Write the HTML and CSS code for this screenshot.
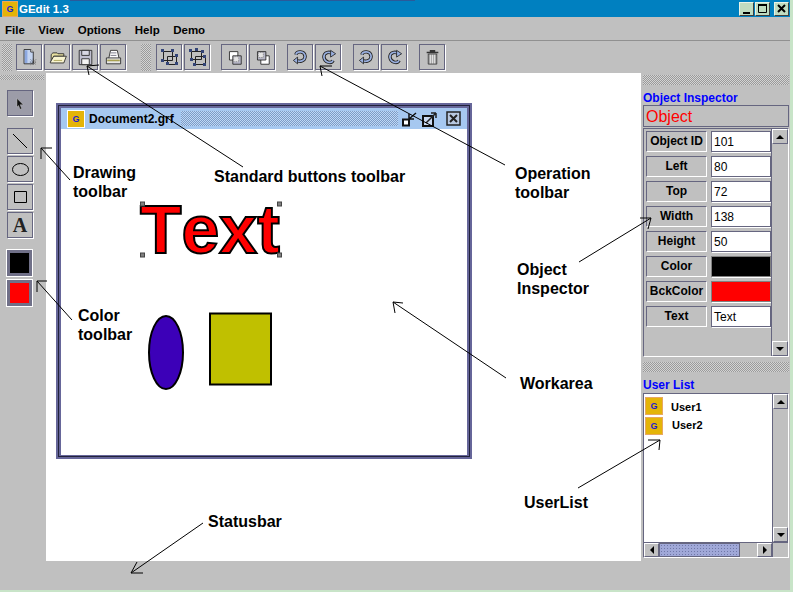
FILE: index.html
```html
<!DOCTYPE html>
<html lang="en">
<head>
    <meta charset="UTF-8">
    <title>GEdit 1.3</title>
    <link rel="stylesheet" href="styles.css">
</head>
<body>
    <svg class="defs" width="0" height="0">
        <symbol id="i-new" viewBox="-2 -2 25 25">
            <path d="M4 1h8l3 3v14H4z" fill="#c4d4f0" stroke="#222"/>
            <path d="M5 2h3v15H5z" fill="#8ca8e0"/>
            <path d="M12 1v3h3" fill="#fff" stroke="#222"/>
            <path d="M15 12v8M11 16h8M12 13l6 6M18 13l-6 6" stroke="#333" stroke-dasharray="1 1"/>
        </symbol>
        <symbol id="i-open" viewBox="-2 -2 25 25">
            <path d="M3 7l2-2h5l1 1h7v3H6L3 16z" fill="#e8e0a0" stroke="#222"/>
            <path d="M2 16l4-7h15l-3 8H2z" fill="#f8f4d0" stroke="#222"/>
            <path d="M6 14h10" stroke="#a8a050"/>
        </symbol>
        <symbol id="i-save" viewBox="-2 -2 25 25">
            <path d="M3 2h15v17H3z" fill="#c0c0d0" stroke="#222"/>
            <path d="M6 2h9v6H6z" fill="#d8d8e4" stroke="#222"/>
            <path d="M6 12h9v7H6z" fill="#f4f4f4" stroke="#222"/>
        </symbol>
        <symbol id="i-print" viewBox="-2 -2 25 25">
            <path d="M5 11l2-9h8l2 9" fill="#fff" stroke="#222"/>
            <path d="M7 5h7M7 8h7" stroke="#667"/>
            <path d="M2 11h17v7H2z" fill="#e8e8e8" stroke="#222"/>
            <path d="M3 14h15" stroke="#a8a050" stroke-width="2"/>
        </symbol>
        <symbol id="i-group" viewBox="0 0 21 21">
            <path d="M4.500 4.500h9v9h-9zM8.500 9.500h9v8h-9z" fill="none" stroke="#222"/>
            <path d="M2 2h3v3H2zM12 2h3v3h-3zM2 12h3v3H2zM16 7h3v3h-3zM7 15h3v3H7zM16 15h3v3h-3z" fill="#334477"/>
        </symbol>
        <symbol id="i-ungroup" viewBox="0 0 21 21">
            <path d="M4.500 4.500h10v8h-10zM8.500 9.500h10v8h-10z" fill="none" stroke="#222"/>
            <path d="M2 2h3v3H2zM8 1h3v3H8zM14 3h3v3h-3zM3 11h3v3H3zM16 8h3v3h-3zM6 16h3v3H6zM16 16h3v3h-3z" fill="#334477"/>
        </symbol>
        <symbol id="i-front" viewBox="-2 -2 25 25">
            <path d="M4.500 3.500h10v10h-10z" fill="#fff" stroke="#222"/>
            <path d="M8.500 8.500h10v10h-10z" fill="#b8b8c8" stroke="#222"/>
            <path d="M9.500 9.500h6v6h-6z" fill="#e4e4e4" stroke="#777" stroke-dasharray="1 1"/>
        </symbol>
        <symbol id="i-back" viewBox="-2 -2 25 25">
            <path d="M8.500 8.500h10v10h-10z" fill="#fff" stroke="#222"/>
            <path d="M4.500 3.500h10v10h-10z" fill="#b8b8c8" stroke="#222"/>
            <path d="M5.500 4.500h6v6h-6z" fill="#e4e4e4" stroke="#777" stroke-dasharray="1 1"/>
        </symbol>
        <symbol id="i-undo" viewBox="-2 -2 25 25">
            <path d="M5 7C6 3 15 2 16 9C16 15 9 16 6 14" fill="none" stroke="#222" stroke-width="4"/>
            <path d="M5 7C6 3 15 2 16 9C16 15 9 16 6 14" fill="none" stroke="#9ab0e0" stroke-width="2"/>
            <path d="M2 14l5-4v8z" fill="#9ab0e0" stroke="#222"/>
        </symbol>
        <symbol id="i-redo" viewBox="-2 -2 25 25">
            <path d="M16 14C14 18 6 17 5 10C5 4 12 3 15 6" fill="none" stroke="#222" stroke-width="4"/>
            <path d="M16 14C14 18 6 17 5 10C5 4 12 3 15 6" fill="none" stroke="#9ab0e0" stroke-width="2"/>
            <path d="M19 6l-6-4v8z" fill="#9ab0e0" stroke="#222"/>
        </symbol>
        <symbol id="i-trash" viewBox="-3 -3 27 27">
            <path d="M3 4h15M8 4V2h5v2" fill="none" stroke="#333" stroke-width="2"/>
            <path d="M5 6h11v13H5z" fill="#a8a8a8" stroke="#333"/>
            <path d="M8 7v11M10.500 7v11M13 7v11" stroke="#eee"/>
        </symbol>
        <symbol id="i-arrow" viewBox="-3 -3 27 27">
            <path d="M6 4l8 8h-4l2 5-2 1-2-5-2 2z" fill="#111" stroke="#ccc" stroke-width=".5"/>
        </symbol>
    </svg>

    <div class="app">
        <div class="titlebar">
            <span class="g-icon">G</span>
            <span class="app-title">GEdit 1.3</span>
            <div class="win-buttons">
                <span class="win-btn"><svg width="13" height="13"><path d="M3 10h7v2H3z" fill="#000"/></svg></span>
                <span class="win-btn"><svg width="13" height="13"><path d="M2.500 2.500h8v8h-8z" fill="none" stroke="#000"/><path d="M2 2h9v2H2z" fill="#000"/></svg></span>
                <span class="win-btn"><svg width="13" height="13"><path d="M3 3l7 7M10 3l-7 7" stroke="#000" stroke-width="2"/></svg></span>
            </div>
        </div>

        <div class="menubar">
            <span>File</span>
            <span>View</span>
            <span>Options</span>
            <span>Help</span>
            <span>Demo</span>
        </div>

        <div class="toolbar">
            <div class="grip grip-v"></div>
            <div class="tool-group first">
                <button class="tool"><svg><use href="#i-new"/></svg></button>
                <button class="tool"><svg><use href="#i-open"/></svg></button>
                <button class="tool"><svg><use href="#i-save"/></svg></button>
                <button class="tool"><svg><use href="#i-print"/></svg></button>
            </div>
            <div class="grip grip-v second"></div>
            <div class="tool-group narrow">
                <button class="tool"><svg><use href="#i-group"/></svg></button>
                <button class="tool"><svg><use href="#i-ungroup"/></svg></button>
            </div>
            <div class="tool-group">
                <button class="tool"><svg><use href="#i-front"/></svg></button>
                <button class="tool"><svg><use href="#i-back"/></svg></button>
            </div>
            <div class="tool-group">
                <button class="tool"><svg><use href="#i-undo"/></svg></button>
                <button class="tool"><svg><use href="#i-redo"/></svg></button>
            </div>
            <div class="tool-group">
                <button class="tool"><svg><use href="#i-undo"/></svg></button>
                <button class="tool"><svg><use href="#i-redo"/></svg></button>
            </div>
            <div class="tool-group">
                <button class="tool"><svg><use href="#i-trash"/></svg></button>
            </div>
        </div>

        <div class="main">
            <div class="sidebar">
                <div class="grip grip-h"></div>
                <button class="tool pressed"><svg><use href="#i-arrow"/></svg></button>
                <div class="draw-tools">
                    <button class="tool"><svg width="21" height="21"><path d="M3 3l14 14" stroke="#000"/></svg></button>
                    <button class="tool"><svg width="21" height="21"><ellipse cx="10.500" cy="10.500" rx="8" ry="6" fill="none" stroke="#000"/></svg></button>
                    <button class="tool"><svg width="21" height="21"><path d="M4.500 4.500h12v11h-12z" fill="none" stroke="#000"/></svg></button>
                    <button class="tool"><span class="tool-a">A</span></button>
                </div>
                <div class="swatches">
                    <div class="swatch swatch-black"></div>
                    <div class="swatch swatch-red"></div>
                </div>
            </div>

            <div class="workarea">
                <div class="window">
                    <div class="window-title">
                        <span class="g-icon">G</span>
                        <span class="doc-name">Document2.grf</span>
                        <div class="window-dots"></div>
                        <svg class="window-icon" width="16" height="16"><path d="M1 8.500h6v6H1z" fill="#fff" stroke="#111" stroke-width="2"/><path d="M7 8l7-6M7 8h5M7 8V3" fill="none" stroke="#111" stroke-width="1.500"/></svg>
                        <svg class="window-icon" width="16" height="16"><path d="M1 5h10v10H1z" fill="#c8d8f0" stroke="#111" stroke-width="2"/><path d="M4 12L14 2M14 2H9M14 2v5" fill="none" stroke="#222" stroke-width="1.500"/></svg>
                        <svg class="window-icon close" width="15" height="15"><path d="M1 1h13v13H1z" fill="#b8c8e0" stroke="#222" stroke-width="1.500"/><path d="M4 4l7 7M11 4l-7 7" stroke="#222" stroke-width="2"/></svg>
                    </div>
                    <div class="window-body">
                        <svg class="canvas" viewBox="61 129 406 325">
                            <text class="shape-text" x="140" y="252">Text</text>
                            <ellipse cx="166" cy="352" rx="17" ry="36.500" fill="#3c00b8" stroke="#000" stroke-width="2"/>
                            <rect x="210" y="313" width="61" height="71" fill="#c0c000" stroke="#000" stroke-width="2"/>
                            <g fill="#808080" stroke="#444">
                                <rect x="140.500" y="201.500" width="4" height="4"/>
                                <rect x="277.500" y="201.500" width="4" height="4"/>
                                <rect x="140.500" y="252.500" width="4" height="4"/>
                                <rect x="277.500" y="252.500" width="4" height="4"/>
                            </g>
                        </svg>
                    </div>
                </div>
            </div>

            <div class="side-right">
                <div class="grip grip-h wide"></div>
                <div class="panel-title">Object Inspector</div>
                <div class="object-name">Object</div>
                <div class="inspector">
                    <div class="props">
                        <div class="prop"><span class="prop-label">Object ID</span><span class="prop-value">101</span></div>
                        <div class="prop"><span class="prop-label">Left</span><span class="prop-value">80</span></div>
                        <div class="prop"><span class="prop-label">Top</span><span class="prop-value">72</span></div>
                        <div class="prop"><span class="prop-label">Width</span><span class="prop-value">138</span></div>
                        <div class="prop"><span class="prop-label">Height</span><span class="prop-value">50</span></div>
                        <div class="prop"><span class="prop-label">Color</span><span class="prop-value color-black"></span></div>
                        <div class="prop"><span class="prop-label">BckColor</span><span class="prop-value color-red"></span></div>
                        <div class="prop"><span class="prop-label">Text</span><span class="prop-value">Text</span></div>
                    </div>
                    <div class="vscroll">
                        <span class="sb-btn"><i class="tri up"></i></span>
                        <span class="sb-track"></span>
                        <span class="sb-btn"><i class="tri down"></i></span>
                    </div>
                </div>
                <div class="grip grip-h wide lower"></div>
                <div class="panel-title user-title">User List</div>
                <div class="userlist">
                    <div class="users">
                        <div class="user"><span class="g-icon">G</span><b>User1</b></div>
                        <div class="user"><span class="g-icon">G</span><b>User2</b></div>
                    </div>
                    <div class="vscroll">
                        <span class="sb-btn"><i class="tri up"></i></span>
                        <span class="sb-track"></span>
                        <span class="sb-btn"><i class="tri down"></i></span>
                    </div>
                    <div class="hscroll">
                        <span class="sb-btn"><i class="tri left"></i></span>
                        <span class="sb-thumb"></span>
                        <span class="sb-track"></span>
                        <span class="sb-btn"><i class="tri right"></i></span>
                    </div>
                    <div class="sb-corner"></div>
                </div>
            </div>
        </div>

        <div class="statusbar"></div>
    </div>

    <!-- callouts on top of the screenshot -->
    <svg class="arrows" width="793" height="592">
        <path d="M243 167L87 66M87 66l2 9M87 66l12-1"/>
        <path d="M505 165L320 66M320 66l2 10M320 66l12 0"/>
        <path d="M70 180L41 148M41 148v11M41 148h11"/>
        <path d="M72 320L37 281M37 281v11M37 281h10"/>
        <path d="M579 262l72-44M651 218h-11M651 218l-3 11"/>
        <path d="M506 378L393 302M393 302l10 1M393 302l2 11"/>
        <path d="M578 488l82-48M660 440h-12M660 440l-1 10"/>
        <path d="M203 523l-72 50M131 573h12M131 573l6-11"/>
    </svg>
    <div class="note note-standard">Standard buttons toolbar</div>
    <div class="note note-operation">Operation<br>toolbar</div>
    <div class="note note-drawing">Drawing<br>toolbar</div>
    <div class="note note-color">Color<br>toolbar</div>
    <div class="note note-inspector">Object<br>Inspector</div>
    <div class="note note-workarea">Workarea</div>
    <div class="note note-userlist">UserList</div>
    <div class="note note-status">Statusbar</div>
</body>
</html>
```

FILE: styles.css
```css
/* Old Java Metal look */
html, body {
    margin: 0;
    height: 100%;
}

body {
    position: relative;
    width: 793px;
    height: 592px;
    overflow: hidden;
    background-color: #c8e4c8;
    font-family: "Liberation Sans", Arial, sans-serif;
    color: #000;
}

.defs {
    position: absolute;
}

.app {
    display: flex;
    flex-direction: column;
    width: 790px;
    height: 590px;
    background-color: #c0c0c0;
}

/* title bar */
.titlebar {
    display: flex;
    align-items: center;
    flex: 0 0 17px;
    background-color: #0080c0;
    background-image: linear-gradient(#2a5a9a, #2a5a9a);
    background-size: 345px 1px;
    background-position: 70px 0;
    background-repeat: no-repeat;
    padding-left: 2px;
    box-sizing: border-box;
}

.g-icon {
    display: inline-flex;
    align-items: center;
    justify-content: center;
    box-sizing: border-box;
    width: 16px;
    height: 16px;
    background-color: #e4b408;
    border: 1px solid #e8a860;
    color: #1c1cd0;
    font-size: 9px;
    font-weight: bold;
}

.app-title {
    margin-left: 1px;
    color: #fff;
    font-size: 11.5px;
    font-weight: bold;
}

.win-buttons {
    display: flex;
    gap: 1px;
    margin-left: auto;
    margin-right: 1px;
}

.win-btn {
    display: flex;
    align-items: center;
    justify-content: center;
    box-sizing: border-box;
    width: 15px;
    height: 14px;
    background-color: #c0dcc0;
    border: 1px solid;
    border-color: #e8f4e8 #404040 #404040 #e8f4e8;
}

.win-btn:last-child {
    margin-left: 3px;
}

/* menu */
.menubar {
    display: flex;
    align-items: center;
    gap: 13.500px;
    flex: 0 0 24px;
    box-sizing: border-box;
    padding: 3px 0 0 5px;
    border-bottom: 1px solid #909090;
    font-size: 11.500px;
    font-weight: bold;
}

/* toolbar */
.toolbar {
    display: flex;
    align-items: flex-start;
    flex: 0 0 32px;
    box-sizing: border-box;
    padding: 3px 0 0 2px;
}

.tool-group {
    display: flex;
    gap: 2px;
    margin-right: 12px;
}

.tool-group.first {
    margin-right: 0;
}

.tool-group.narrow {
    margin-right: 11px;
}

.tool {
    display: flex;
    align-items: center;
    justify-content: center;
    box-sizing: border-box;
    width: 26px;
    height: 26px;
    padding: 0;
    background-color: #c0c0c0;
    border: 1px solid #666680;
    box-shadow: 1px 1px 0 #fff;
}

.tool svg {
    width: 21px;
    height: 21px;
}

.tool.pressed {
    background-color: #9c9ca8;
}

.tool-a {
    font-family: "Liberation Serif", serif;
    font-size: 20px;
    font-weight: bold;
    color: #222;
}

.grip {
    background-color: #c0c0c0;
    background-image: repeating-conic-gradient(#9a9a9a 0 25%, #d4d4d4 0 50%);
    background-size: 2px 2px;
}

.grip-v {
    width: 10px;
    height: 27px;
    margin-right: 4px;
}

.grip-v.second {
    margin-left: 15px;
    margin-right: 5px;
}

.grip-h {
    height: 5px;
    width: 44px;
    margin-top: 2px;
}

/* main area */
.main {
    display: flex;
    flex: 0 0 488px;
}

.sidebar {
    width: 46px;
    display: flex;
    flex-direction: column;
    flex: none;
}

.sidebar > .tool {
    margin: 10px 0 0 7px;
}

.draw-tools {
    display: flex;
    flex-direction: column;
    gap: 2px;
    margin: 12px 0 0 7px;
}

.swatches {
    display: flex;
    flex-direction: column;
    gap: 2px;
    margin: 11px 0 0 6px;
}

.swatch {
    box-sizing: border-box;
    width: 27px;
    height: 28px;
    border: 1px solid #fff;
    box-shadow: inset 0 0 0 3px #707088;
}

.swatch-black {
    background-color: #000;
}

.swatch-red {
    background-color: #f00;
}

.workarea {
    position: relative;
    flex: 0 0 595px;
    background-color: #fff;
}

/* document window */
.window {
    position: absolute;
    left: 10px;
    top: 30px;
    display: flex;
    flex-direction: column;
    box-sizing: border-box;
    width: 416px;
    height: 356px;
    background-color: #666699;
    border: 2px solid #666699;
    padding: 3px 3px 2px 3px;
    box-shadow: inset 0 0 0 1px #22223c;
}

.window-title {
    display: flex;
    align-items: center;
    flex: 0 0 21px;
    background-color: #a6c8f0;
    padding-left: 6px;
}

.window-title .g-icon {
    width: 18px;
    height: 18px;
    border: 1px solid #fff;
}

.doc-name {
    margin-left: 4px;
    font-size: 12px;
    font-weight: bold;
}

.window-dots {
    width: 217px;
    height: 15px;
    margin-left: 7px;
    background-image: repeating-conic-gradient(#7c9cc8 0 25%, #c0d8f4 0 50%);
    background-size: 2px 2px;
}

.window-icon {
    margin-left: 4px;
    flex: none;
}

.window-icon.close {
    margin-left: 8px;
}

.window-body {
    flex: 1;
    background-color: #fff;
}

.canvas {
    display: block;
    width: 100%;
    height: 100%;
}

.shape-text {
    font-size: 68px;
    font-weight: bold;
    font-kerning: none;
    fill: #f00;
    stroke: #000;
    stroke-width: 2px;
}

/* right side */
.side-right {
    display: flex;
    flex-direction: column;
    flex: 0 0 149px;
    box-sizing: border-box;
    padding-left: 2px;
}

.grip-h.wide {
    width: 146px;
    height: 10px;
}

.grip-h.lower {
    margin-top: 5px;
}

.panel-title {
    margin-top: 6px;
    color: #0000ff;
    font-size: 12px;
    font-weight: bold;
    line-height: 14px;
}

.user-title {
    margin-top: 7px;
    line-height: 13px;
}

.object-name {
    box-sizing: border-box;
    width: 146px;
    height: 22px;
    padding-left: 2px;
    border: 1px solid #666680;
    color: #f00;
    font-size: 16px;
    line-height: 21px;
}

.inspector {
    display: flex;
    box-sizing: border-box;
    width: 146px;
    height: 229px;
    margin-top: 1px;
    border: 1px solid #666680;
    border-right-color: #fff;
    border-bottom-color: #fff;
}

.props {
    display: flex;
    flex-direction: column;
    gap: 4px;
    flex: 1;
    padding: 2px 0 0 2px;
}

.prop {
    display: flex;
    gap: 4px;
}

.prop-label {
    box-sizing: border-box;
    width: 61px;
    height: 21px;
    border: 1px solid;
    border-color: #666680 #fff #fff #666680;
    text-align: center;
    font-size: 12px;
    font-weight: bold;
    line-height: 19px;
}

.prop-value {
    box-sizing: border-box;
    width: 60px;
    height: 21px;
    padding-left: 2px;
    background-color: #fff;
    border: 1px solid #666680;
    box-shadow: 1px 1px 0 #fff;
    font-size: 12px;
    line-height: 20px;
}

.prop-value.color-black {
    background-color: #000;
    border-color: #808080;
}

.prop-value.color-red {
    background-color: #f00;
    border-color: #808080;
}

.vscroll {
    display: flex;
    flex-direction: column;
    flex: 0 0 16px;
    border-left: 1px solid #666680;
}

.sb-btn {
    display: flex;
    align-items: center;
    justify-content: center;
    box-sizing: border-box;
    flex: 0 0 15px;
    border: 1px solid;
    border-color: #fff #666680 #666680 #fff;
}

.sb-track {
    flex: 1;
}

.tri {
    width: 0;
    height: 0;
    border: 4px solid transparent;
}

.tri.up {
    border-top: 0;
    border-bottom: 4px solid #000;
}

.tri.down {
    border-bottom: 0;
    border-top: 4px solid #000;
}

.tri.left {
    border-left: 0;
    border-right: 4px solid #000;
}

.tri.right {
    border-right: 0;
    border-left: 4px solid #000;
}

.userlist {
    display: grid;
    grid-template-columns: 1fr 16px;
    grid-template-rows: 1fr 15px;
    box-sizing: border-box;
    width: 146px;
    height: 165px;
    margin-top: 1px;
    border: 1px solid #666680;
    border-right-color: #fff;
    border-bottom-color: #fff;
}

.users {
    background-color: #fff;
    padding: 2px 0 0 1px;
}

.user {
    display: flex;
    align-items: center;
    gap: 8px;
    height: 20px;
    font-size: 11px;
}

.user .g-icon {
    width: 18px;
    height: 18px;
}

.user:first-child b {
    margin-top: 2px;
}

.user:last-child b {
    margin: -2px 0 0 1px;
}

.hscroll {
    display: flex;
    border-top: 1px solid #666680;
}

.hscroll .sb-btn {
    flex: 0 0 15px;
}

.sb-thumb {
    flex: 0 0 81px;
    background-color: #a0a8d8;
    background-image: radial-gradient(#7078a8 30%, transparent 40%);
    background-size: 3px 3px;
    border: 1px solid #666680;
    box-sizing: border-box;
}

.sb-corner {
    border-top: 1px solid #666680;
    border-left: 1px solid #666680;
}

.statusbar {
    flex: 1;
}

/* callouts */
.arrows {
    position: absolute;
    left: 0;
    top: 0;
    pointer-events: none;
}

.arrows path {
    fill: none;
    stroke: #000;
    stroke-width: 1;
}

.note {
    position: absolute;
    font-size: 16px;
    font-weight: bold;
    line-height: 19px;
}

.note-standard { left: 214px; top: 167px; }
.note-operation { left: 515px; top: 164px; }
.note-drawing { left: 73px; top: 163px; }
.note-color { left: 78px; top: 306px; }
.note-inspector { left: 517px; top: 260px; }
.note-workarea { left: 520px; top: 374px; }
.note-userlist { left: 524px; top: 493px; }
.note-status { left: 208px; top: 512px; }
```
